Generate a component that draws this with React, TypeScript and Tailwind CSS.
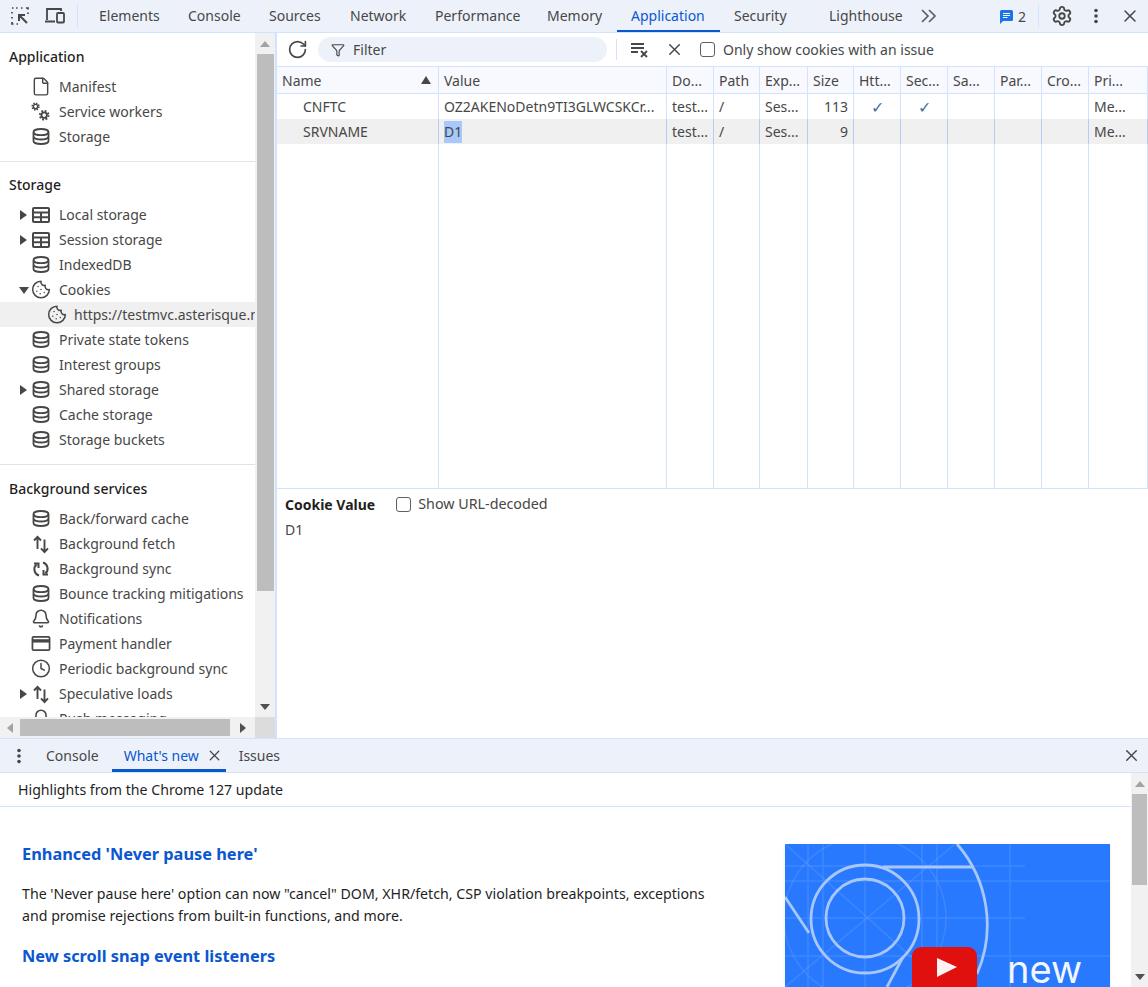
import React from "react";
import { Cookie, File, Bell, Clock, Settings, X, RotateCw, Filter } from "lucide-react";

const c = "#474747";
const Svg = ({ s = 20, children, className = "" }: { s?: number; children: React.ReactNode; className?: string }) => (
  <svg width={s} height={s} viewBox="0 0 20 20" fill="none" stroke={c} strokeWidth={1.8} className={className}>{children}</svg>
);
const Db = () => (
  <Svg s={21}>
    <path d="M2.500 5.500C2.500 3.800 5.800 2.500 10 2.500s7.500 1.300 7.500 3v9c0 1.700-3.300 3-7.500 3s-7.500-1.300-7.500-3z" />
    <path d="M2.500 6C3.500 8 6.500 8.700 10 8.700S16.500 8 17.500 6M2.500 10.500C3.500 12.300 6.500 13 10 13s6.500-.7 7.500-2.500" />
  </Svg>
);
const Grid = () => (
  <Svg>
    <rect x="2" y="3" width="16" height="14" rx="1" strokeWidth="2" />
    <path d="M2 7.500h16M2 12.200h16M10 7.500V17" strokeWidth="2" />
  </Svg>
);
const Gears = () => (
  <svg width="22" height="22" viewBox="0 0 22 22" fill="none" stroke={c}>
    <circle cx="5" cy="5" r="2.400" strokeWidth="1.600" />
    <circle cx="5" cy="5" r="3.700" strokeWidth="1.700" strokeDasharray="1.600 1.300" />
    <circle cx="14.500" cy="14.500" r="3" strokeWidth="2" />
    <circle cx="14.500" cy="14.500" r="4.800" strokeWidth="2" strokeDasharray="2 1.770" />
  </svg>
);
const UpDown = () => (
  <Svg>
    <path d="M6.500 15V3M3 6.500l3.500-3.700L10 6.500M13.500 5.500V18M10 14.300l3.500 3.700 3.500-3.700" strokeWidth="1.900" />
  </Svg>
);
const Sync = () => (
  <Svg>
    <path d="M8 16.500A6.500 6.500 0 015.500 5.500M12 3.500A6.500 6.500 0 0114.500 14.500" strokeWidth="2" />
    <path d="M3 4.500h4.500V9M17 15.500h-4.500V11" strokeWidth="2" />
  </Svg>
);
const Card = () => (
  <svg width="21" height="21" viewBox="0 0 21 21" fill="none">
    <rect x="1.500" y="3.500" width="18" height="14" rx="1.200" stroke={c} strokeWidth="1.800" />
    <rect x="1.500" y="6" width="18" height="3.500" fill={c} />
  </svg>
);
const Arrow = ({ open }: { open?: boolean }) => (
  <svg width="10" height="10" viewBox="0 0 10 10" fill={c}>
    {open ? <polygon points="0,2 10,2 5,9" /> : <polygon points="1,0 8,5 1,10" />}
  </svg>
);
const Tri = ({ d, color = "#505050" }: { d: "u" | "d" | "l" | "r"; color?: string }) => {
  const pts = { u: "5,2 10,8 0,8", d: "0,2 10,2 5,8", l: "8,0 8,10 2,5", r: "2,0 2,10 8,5" }[d];
  return <svg width="10" height="10" viewBox="0 0 10 10" fill={color}><polygon points={pts} /></svg>;
};

type R = { l: string; i: React.ReactNode; a?: "o" | "c" };
const Row = ({ l, i, a }: R) => (
  <div className="flex items-center h-[25px] pl-[19px] whitespace-nowrap">
    <span className="w-[12px] flex items-center">{a && <Arrow open={a === "o"} />}</span>
    <span className="w-[20px] flex justify-center items-center">{i}</span>
    <span className="ml-[8px]">{l}</span>
  </div>
);
const Title = ({ t, tight }: { t: string; tight?: boolean }) => (
  <div className={`${tight ? "h-[40px] pt-[4px]" : "h-[41px] pt-[5px]"} pl-[9px] flex items-center text-[#1f1f1f] font-medium`}>{t}</div>
);

const tabs: [string, number, boolean?][] = [
  ["Elements", 89], ["Console", 81], ["Sources", 81], ["Network", 85], ["Performance", 112], ["Memory", 84], ["Application", 103, true], ["Security", 95], ["Lighthouse", 101],
];
const cols = "grid grid-cols-[162px_228px_47px_46px_48px_46px_47px_47px_47px_47px_47px_59px]";
const heads = ["Name", "Value", "Do...", "Path", "Exp...", "Size", "Htt...", "Sec...", "Sa...", "Par...", "Cro...", "Pri..."];
const rowA = ["CNFTC", "OZ2AKENoDetn9TI3GLWCSKCr...", "test...", "/", "Ses...", "113", "✓", "✓", "", "", "", "Me..."];
const rowB = ["SRVNAME", "D1", "test...", "/", "Ses...", "9", "", "", "", "", "", "Me..."];

const Cell = ({ v, i, dark }: { v: string; i: number; dark?: boolean }) => (
  <div className={`h-[25px] border-r ${dark ? "border-[#b6ccf0]" : "border-[#d3e3fd]"} px-[5px] flex items-center overflow-hidden whitespace-nowrap ${i === 0 ? "pl-[26px]" : ""} ${i === 5 ? "justify-end" : ""} ${i === 6 || i === 7 ? "justify-center" : ""}`}>
    {v === "D1" ? <span className="bg-[#a8c7fa] h-[22px] flex items-center">D1</span> : v === "✓" ? <span className="font-['DejaVu_Sans',sans-serif] text-[16px] text-[#3f6fa8]">✓</span> : v}
  </div>
);

export default function App() {
  return (
    <div className="w-[1148px] h-[987px] overflow-hidden flex flex-col bg-white text-[14px] text-[#474747] font-['Noto_Sans','Liberation_Sans',sans-serif]">
      {/* top bar */}
      <div className="h-[33px] shrink-0 bg-[#edf2fa] border-b border-[#d3e3fd] flex items-center">
        <div className="w-[85px] shrink-0 flex items-center">
          <svg width="20" height="20" viewBox="0 0 20 20" fill="none" stroke={c} strokeWidth="1.7" className="ml-[10px]">
            <path d="M2 2h1.500M6 2h1.500M11 2h1.500M16 2h2v1.500M2 6v1.500M2 11v1.500M2 16v2h1.500M6.500 18h1.500M18 6.500V8" />
            <path d="M17 17L9 9M9 15V9h6" strokeWidth="2" />
          </svg>
          <svg width="22" height="20" viewBox="0 0 22 20" fill="none" stroke={c} strokeWidth="1.8" className="ml-[14px]">
            <path d="M3 14V3h14v2M1 15.500h10" />
            <rect x="13" y="7" width="7" height="9.500" rx="1" />
          </svg>
          <span className="ml-[11px] w-px h-[22px] bg-[#d3e3fd]" />
        </div>
        {tabs.map(([t, w, active]) => (
          <div key={t} style={{ width: w }} className={`h-full shrink-0 flex items-center pl-[14px] whitespace-nowrap border-b-2 ${active ? "text-[#0b57d0] border-[#0b57d0]" : "border-transparent"}`}>{t}</div>
        ))}
        <svg width="18" height="16" viewBox="0 0 18 16" fill="none" stroke="#5f5f5f" strokeWidth="1.7" className="ml-[4px]">
          <path d="M2 2l6 6-6 6M9 2l6 6-6 6" />
        </svg>
        <div className="ml-auto flex items-center">
          <svg width="15" height="15" viewBox="0 0 15 15"><path d="M1 2.500A1.500 1.500 0 012.500 1h10A1.500 1.500 0 0114 2.500v8a1.500 1.500 0 01-1.500 1.500H4l-3 3z" fill="#1a73e8" /><path d="M4 4.500h7M4 6.500h7M4 8.500h4.500" stroke="#fff" /></svg>
          <span className="ml-[4px] text-[#474747]">2</span>
          <span className="ml-[12px] w-px h-[22px] bg-[#d3e3fd]" />
          <Settings size={22} color={c} strokeWidth={2} className="ml-[12px]" />
          <svg width="6" height="16" viewBox="0 0 6 16" fill={c} className="ml-[20px]"><circle cx="3" cy="2.500" r="1.800" /><circle cx="3" cy="8" r="1.800" /><circle cx="3" cy="13.500" r="1.800" /></svg>
          <X size={20} color={c} strokeWidth={1.8} className="ml-[21px] mr-[8px]" />
        </div>
      </div>

      {/* middle */}
      <div className="h-[705px] shrink-0 flex">
        {/* sidebar */}
        <div className="w-[277px] shrink-0 flex flex-col border-r-2 border-[#d3e3fd]">
          <div className="flex-1 min-h-0 flex">
            <div className="w-[255px] shrink-0 overflow-hidden">
              <Title t="Application" />
              <Row l="Manifest" i={<File size={23} color={c} strokeWidth={1.7} />} />
              <Row l="Service workers" i={<Gears />} />
              <Row l="Storage" i={<Db />} />
              <div className="mt-[12px] border-t border-[#e3e3e3]" />
              <Title t="Storage" tight />
              <Row l="Local storage" a="c" i={<Grid />} />
              <Row l="Session storage" a="c" i={<Grid />} />
              <Row l="IndexedDB" i={<Db />} />
              <Row l="Cookies" a="o" i={<Cookie size={23} color={c} strokeWidth={1.8} />} />
              <div className="flex items-center h-[25px] pl-[47px] bg-[#f0f0f0] whitespace-nowrap overflow-hidden">
                <span className="w-[20px] shrink-0 flex justify-center"><Cookie size={23} color={c} strokeWidth={1.8} /></span>
                <span className="ml-[7px]">https://testmvc.asterisque.net</span>
              </div>
              <Row l="Private state tokens" i={<Db />} />
              <Row l="Interest groups" i={<Db />} />
              <Row l="Shared storage" a="c" i={<Db />} />
              <Row l="Cache storage" i={<Db />} />
              <Row l="Storage buckets" i={<Db />} />
              <div className="mt-[12px] border-t border-[#e3e3e3]" />
              <Title t="Background services" />
              <Row l="Back/forward cache" i={<Db />} />
              <Row l="Background fetch" i={<UpDown />} />
              <Row l="Background sync" i={<Sync />} />
              <Row l="Bounce tracking mitigations" i={<Db />} />
              <Row l="Notifications" i={<Bell size={21} color={c} strokeWidth={1.9} />} />
              <Row l="Payment handler" i={<Card />} />
              <Row l="Periodic background sync" i={<Clock size={23} color={c} strokeWidth={1.8} />} />
              <Row l="Speculative loads" a="c" i={<UpDown />} />
              <Row l="Push messaging" i={<Bell size={21} color={c} strokeWidth={1.9} />} />
            </div>
            <div className="w-[20px] shrink-0 bg-[#f1f1f1] flex flex-col items-center">
              <div className="h-[21px] shrink-0 flex items-center justify-center"><Tri d="u" color="#a3a3a3" /></div>
              <div className="h-[537px] w-[17px] bg-[#bdbdbd]" />
              <div className="mt-auto h-[21px] flex items-center justify-center"><Tri d="d" /></div>
            </div>
          </div>
          <div className="h-[21px] shrink-0 flex bg-[#f1f1f1] items-center">
            <div className="w-[20px] flex justify-center"><Tri d="l" color="#a3a3a3" /></div>
            <div className="w-[210px] h-[17px] bg-[#bdbdbd]" />
            <div className="w-[25px] flex justify-center"><Tri d="r" /></div>
            <div className="w-[20px] h-full bg-[#dcdcdc]" />
          </div>
        </div>

        {/* main */}
        <div className="flex-1 min-w-0 flex flex-col">
          <div className="h-[34px] shrink-0 flex items-center border-b border-[#d3e3fd]">
            <RotateCw size={21} color={c} strokeWidth={1.9} className="ml-[10px]" />
            <div className="ml-[10px] w-[289px] h-[25px] rounded-full bg-[#edf2fa] flex items-center pl-[13px]">
              <Filter size={14} color={c} strokeWidth={2} />
              <span className="ml-[8px]">Filter</span>
            </div>
            <span className="ml-[9px] w-px h-[21px] bg-[#d3e3fd]" />
            <svg width="20" height="16" viewBox="0 0 20 16" fill="none" stroke={c} strokeWidth="1.8" className="ml-[13px]">
              <path d="M1 2h13M1 6h13M1 10h7M11 9l6 6M17 9l-6 6" />
            </svg>
            <X size={19} color={c} strokeWidth={1.8} className="ml-[15px]" />
            <span className="ml-[16px] w-[15px] h-[15px] rounded-[3px] border border-[#5f5f5f]" />
            <span className="ml-[8px] whitespace-nowrap">Only show cookies with an issue</span>
          </div>
          {/* table */}
          <div className="h-[422px] shrink-0 flex flex-col border-b border-[#d3e3fd]">
            <div className={`${cols} h-[27px] shrink-0 bg-[#f8f9fe] border-b border-[#d3e3fd]`}>
              {heads.map((h, i) => (
                <div key={h} className="border-r border-[#d3e3fd] pl-[5px] pr-[7px] flex items-center justify-between whitespace-nowrap overflow-hidden">
                  {h}
                  {i === 0 && <svg width="10" height="8" viewBox="0 0 10 8" fill={c}><polygon points="5,0 10,8 0,8" /></svg>}
                </div>
              ))}
            </div>
            <div className={cols}>{rowA.map((v, i) => <Cell key={i} v={v} i={i} />)}</div>
            <div className={`${cols} bg-[#f0f0f0]`}>{rowB.map((v, i) => <Cell key={i} v={v} i={i} dark />)}</div>
            <div className={`${cols} flex-1`}>{heads.map((h) => <div key={h} className="border-r border-[#d3e3fd]" />)}</div>
          </div>
          {/* cookie value */}
          <div className="flex-1 min-h-0 pl-[8px] pt-[3px]">
            <div className="flex items-center h-[24px]">
              <span className="font-bold text-[#1f1f1f]">Cookie Value</span>
              <span className="ml-[21px] w-[15px] h-[15px] rounded-[3px] border border-[#5f5f5f]" />
              <span className="ml-[7px] text-[14.3px]">Show URL-decoded</span>
            </div>
            <div className="mt-[1px] h-[24px] flex items-center">D1</div>
          </div>
        </div>
      </div>

      {/* drawer */}
      <div className="flex-1 min-h-0 flex flex-col border-t border-[#d3e3fd]">
        <div className="h-[34px] shrink-0 bg-[#edf2fa] border-b border-[#d3e3fd] flex items-center">
          <svg width="6" height="16" viewBox="0 0 6 16" fill={c} className="ml-[16px]"><circle cx="3" cy="2.500" r="1.800" /><circle cx="3" cy="8" r="1.800" /><circle cx="3" cy="13.500" r="1.800" /></svg>
          <span className="ml-[24px]">Console</span>
          <div className="ml-[13px] w-[114px] h-full flex items-center pl-[12px] pt-[3px] text-[#0b57d0] border-b-[3px] border-[#0b57d0] whitespace-nowrap">
            What's new
            <X size={17} color={c} strokeWidth={1.8} className="ml-[7px]" />
          </div>
          <span className="ml-[13px]">Issues</span>
          <X size={19} color={c} strokeWidth={1.8} className="ml-auto mr-[7px]" />
        </div>
        <div className="flex-1 min-h-0 flex">
          <div className="w-[1131px] shrink-0 flex flex-col">
            <div className="h-[34px] shrink-0 border-b border-[#d3e3fd] pl-[18px] flex items-center text-[#1f1f1f] text-[14.15px]">Highlights from the Chrome 127 update</div>
            <div className="flex">
              <div className="w-[785px] shrink-0 pl-[22px] pt-[34px] text-[#1f1f1f]">
                <h2 className="text-[16.35px] leading-[26px] font-bold text-[#0b57d0]">Enhanced 'Never pause here'</h2>
                <p className="mt-[16px] leading-[22px] text-[14.2px]">The 'Never pause here' option can now "cancel" DOM, XHR/fetch, CSP violation breakpoints, exceptions<br />and promise rejections from built-in functions, and more.</p>
                <h2 className="mt-[16px] text-[16.35px] leading-[26px] font-bold text-[#0b57d0]">New scroll snap event listeners</h2>
              </div>
              <div className="mt-[37px] w-[325px] h-[143px] shrink-0 shadow-sm">
                <svg width="325" height="143" viewBox="0 0 325 143" fill="none" className="block">
                  <rect width="325" height="143" fill="#2979ff" />
                  <g stroke="#fff" strokeOpacity="0.1" strokeWidth="1.500">
                    <path d="M0 22h240M0 37h325M0 74h240M0 112h325M80 0v143M23 0v143M38 0v143M137 0v143M152 0v143M225 0v143" />
                    <path d="M0 0l160 143M0 143L170 0" />
                    <circle cx="80" cy="74" r="81" />
                  </g>
                  <g stroke="#a8c7fa" strokeWidth="2.800">
                    <circle cx="80" cy="74" r="39" />
                    <circle cx="80" cy="75" r="54" />
                    <path d="M98 23h90M172 0A123 123 0 0 1 192 130M0 53l24 36M118 113L102 143" />
                  </g>
                  <rect x="127" y="103" width="65" height="60" rx="9" fill="#e0100f" />
                  <polygon points="152,114 172,123 152,133" fill="#fff" fillOpacity="0.95" />
                  <text x="222" y="139" fill="#f2f7ff" fontSize="38" fontFamily="Inter, sans-serif">new</text>
                </svg>
              </div>
            </div>
          </div>
          <div className="flex-1 bg-[#f1f1f1] flex flex-col items-center">
            <div className="h-[21px] shrink-0 flex items-center justify-center"><Tri d="u" color="#a3a3a3" /></div>
            <div className="h-[91px] w-[15px] bg-[#bdbdbd]" />
            <div className="mt-auto h-[21px] flex items-center justify-center"><Tri d="d" /></div>
          </div>
        </div>
      </div>
    </div>
  );
}
